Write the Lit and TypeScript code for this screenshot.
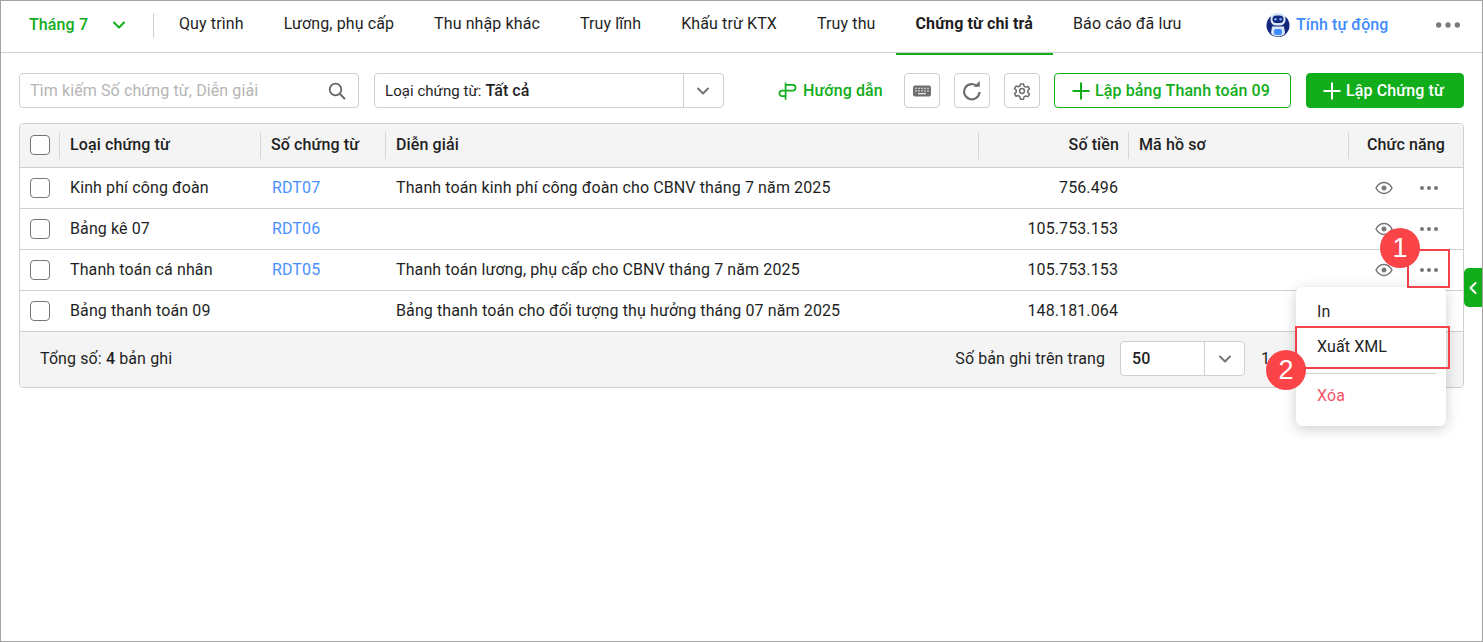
import { LitElement, html, css, svg } from "lit";
import { customElement } from "lit/decorators.js";

const chevron = (cls: string) => html`<svg class=${cls} width="16" height="16" viewBox="0 0 16 16" fill="none" stroke="currentColor" stroke-width="2" stroke-linecap="round" stroke-linejoin="round"><path d="M3 5.5 8 10.5 13 5.5"/></svg>`;
const dots = (cls: string) => html`<svg class=${cls} width="20" height="6" viewBox="0 0 20 6" fill="currentColor"><circle cx="3" cy="3" r="2"/><circle cx="10" cy="3" r="2"/><circle cx="17" cy="3" r="2"/></svg>`;
const eye = html`<svg class="eye" width="18" height="14" viewBox="0 0 18 14" fill="none" stroke="#757575" stroke-width="1.5"><path d="M1 7C3 3.4 5.8 1.6 9 1.6S15 3.4 17 7C15 10.6 12.2 12.4 9 12.4S3 10.6 1 7Z"/><circle cx="9" cy="7" r="2.1" fill="#757575" stroke-width="1"/></svg>`;
const plus = html`<svg width="18" height="18" viewBox="0 0 18 18" stroke="currentColor" stroke-width="2" stroke-linecap="square"><path d="M9 1.500V16.500M1.500 9H16.500"/></svg>`;

const rows = [
  ["Kinh phí công đoàn", "RDT07", "Thanh toán kinh phí công đoàn cho CBNV tháng 7 năm 2025", "756.496"],
  ["Bảng kê 07", "RDT06", "", "105.753.153"],
  ["Thanh toán cá nhân", "RDT05", "Thanh toán lương, phụ cấp cho CBNV tháng 7 năm 2025", "105.753.153"],
  ["Bảng thanh toán 09", "", "Bảng thanh toán cho đối tượng thụ hưởng tháng 07 năm 2025", "148.181.064"],
];
const tabs = ["Quy trình", "Lương, phụ cấp", "Thu nhập khác", "Truy lĩnh", "Khấu trừ KTX", "Truy thu", "Chứng từ chi trả", "Báo cáo đã lưu"];

@customElement("app-root")
export class AppRoot extends LitElement {
  static styles = css`
    :host { display: block; width: 1483px; height: 642px; box-sizing: border-box; border: 1px solid #a3a3a3; position: relative; overflow: hidden; background: #fff; font: 16px/20px Roboto, sans-serif; letter-spacing: 0.11px; color: #1f1f1f; }
    * { box-sizing: border-box; }
    .nav { height: 52px; border-bottom: 1px solid #cfcfcf; display: flex; align-items: flex-start; padding-left: 28px; }
    .month { width: 125px; height: 48px; display: flex; align-items: center; color: #11ad1b; font-weight: 500; flex: none; position: relative; }
    .month span { width: 82px; }
    .month::after { content: ""; position: absolute; right: 0; top: 12px; height: 25px; width: 1px; background: #cfcfcf; }
    .month svg { color: #11ad1b; }
    .tab { height: 54px; padding: 0 20px; line-height: 46px; flex: none; white-space: nowrap; }
    .tabs { display: flex; padding-left: 5px; flex: 1; }
    .tab.active { font-weight: 700; border-bottom: 2px solid #11ad1b; letter-spacing: 0.13px; }
    .auto { display: flex; align-items: center; height: 47px; color: #3f8cff; font-weight: 500; gap: 4px; position: absolute; left: 1263px; top: 0; letter-spacing: 0.06px; }
    .navdots { position: absolute; left: 1433px; top: 20px; width: 28px; height: 8px; color: #7b7b7b; }
    .toolbar { display: flex; align-items: center; height: 35px; margin: 20px 18px 0; }
    .search { width: 340px; height: 35px; border: 1px solid #cfcfcf; border-radius: 4px; display: flex; align-items: center; justify-content: space-between; padding: 0 12px 0 10px; color: #b5b5b5; }
    .select { width: 350px; height: 35px; margin-left: 15px; border: 1px solid #cfcfcf; border-radius: 4px; display: flex; align-items: center; padding-left: 10px; font-size: 15px; letter-spacing: 0.05px; }
    .select b { font-weight: 500; margin-left: 4px; flex: 1; font-size: 16px; }
    .select .arrow { width: 40px; height: 33px; border-left: 1px solid #cfcfcf; display: flex; align-items: center; justify-content: center; color: #757575; padding-right: 2px; }
    .guide { display: flex; align-items: center; gap: 6px; margin-left: 54px; width: 106px; color: #11ad1b; font-weight: 500; white-space: nowrap; }
    .ico { width: 36px; height: 35px; border: 1px solid #cfcfcf; border-radius: 4px; display: flex; align-items: center; justify-content: center; flex: none; }
    .guide + .ico { margin-left: 20px; }
    .ico + .ico { margin-left: 14px; }
    .btn { height: 35px; border-radius: 4px; display: flex; align-items: center; justify-content: center; gap: 5px; font-weight: 500; border: 1px solid #11ad1b; color: #11ad1b; flex: none; padding-right: 3px; }
    .btn.a { width: 237px; margin-left: 14px; }
    .btn.b { width: 158px; margin-left: 15px; background: #11ad1b; color: #fff; }
    .table { margin: 15px 18px 0; height: 265px; border: 1px solid #cfcfcf; border-radius: 4px; overflow: hidden; }
    .row { display: grid; grid-template-columns: 40px 201px 125px 593px 150px 220px 114px; height: 41px; border-bottom: 1px solid #cfcfcf; align-items: center; }
    .row.head { height: 44px; background: #f4f4f4; font-weight: 500; }
    .cell { padding: 0 10px; white-space: nowrap; height: 100%; display: flex; align-items: center; position: relative; }
    .head .cell { padding-bottom: 2px; }
    .head .cell + .cell::before { content: ""; position: absolute; left: -1px; top: 8px; bottom: 8px; width: 1px; background: #d6d6d6; }
    .num { justify-content: flex-end; }
    .row:not(.head) .num { padding-right: 11px; }
    .center { justify-content: center; padding: 0; }
    .box { width: 20px; height: 20px; border: 1px solid #757575; border-radius: 4px; background: #fff; }
    .link { color: #4a8fff; padding-left: 11px; }
    .acts { gap: 26px; justify-content: flex-end; padding-right: 24px; color: #757575; }
    .foot { height: 55px; background: #f4f4f4; display: flex; align-items: center; padding: 0 20px 2px; }
    .foot b { font-weight: 500; }
    .grow { flex: 1; }
    .pp { width: 125px; height: 35px; background: #fff; border: 1px solid #cfcfcf; border-radius: 4px; display: flex; align-items: center; margin: 0 16px 0 15px; padding-left: 11px; font-weight: 500; }
    .pp span { flex: 1; }
    .pp div { width: 40px; height: 33px; border-left: 1px solid #cfcfcf; display: flex; align-items: center; justify-content: center; color: #757575; }
    .pager { width: 182px; }
    .side { position: absolute; left: 1463px; top: 267px; width: 18px; height: 39px; background: #11ad1b; border-radius: 5px 0 0 5px; display: flex; align-items: center; justify-content: center; color: #fff; }
    .menu { position: absolute; left: 1295px; top: 286px; width: 150px; height: 139px; background: #fff; border-radius: 6px; box-shadow: 0 3px 14px rgba(0,0,0,.2); padding-top: 7px; }
    .item { height: 35px; padding-left: 21px; display: flex; align-items: center; }
    .item.del { color: #f2546a; height: 44px; }
    .sep { height: 1px; background: #cfcfcf; margin: 9px 10px 0; }
    .mark { position: absolute; border: 2px solid #f0434a; }
    .m1 { left: 1406px; top: 248px; width: 43px; height: 39px; }
    .m2 { left: 1294px; top: 325px; width: 155px; height: 43px; }
    .badge { position: absolute; width: 40px; height: 40px; border-radius: 50%; background: #fb4447; color: #fff; font: 27px/40px "Liberation Sans", sans-serif; text-align: center; }
    .b1 { left: 1379px; top: 227px; }
    .b2 { left: 1265px; top: 349px; }
  `;

  render() {
    return html`
      <div class="nav">
        <div class="month"><span>Tháng 7</span>${chevron("")}</div>
        <div class="tabs">${tabs.map((t) => html`<div class="tab ${t === "Chứng từ chi trả" ? "active" : ""}">${t}</div>`)}</div>
        <div class="auto">
          <svg width="28" height="26" viewBox="0 0 28 26">
            <circle cx="14" cy="13.500" r="11.500" fill="#12267e"/>
            <rect x="6.500" y="1" width="15" height="12.500" rx="5.500" fill="#dbe6f5"/>
            <rect x="8.500" y="3.500" width="11" height="7.500" rx="3.700" fill="#12267e"/>
            <circle cx="11.500" cy="7.200" r="1.200" fill="#7fb2ff"/><circle cx="16.500" cy="7.200" r="1.200" fill="#7fb2ff"/>
            <path d="M8 14.500H20L21 21C19.500 25.500 8.500 25.500 7 21Z" fill="#dbe6f5"/>
            <rect x="10" y="17" width="8" height="6" rx="2" fill="#3f8cff"/>
          </svg>
          <span>Tính tự động</span>
        </div>
        ${dots("navdots")}
      </div>
      <div class="toolbar">
        <div class="search"><span>Tìm kiếm Số chứng từ, Diễn giải</span>
          <svg width="18" height="18" viewBox="0 0 18 18" fill="none" stroke="#666" stroke-width="1.8" stroke-linecap="round"><circle cx="7.5" cy="7.5" r="5.8"/><path d="M12 12 16.5 16.5"/></svg>
        </div>
        <div class="select"><span>Loại chứng từ:</span><b>Tất cả</b><div class="arrow">${chevron("")}</div></div>
        <div class="guide">
          <svg width="19" height="20" viewBox="0 0 20 20" fill="none" stroke="currentColor" stroke-width="1.8" stroke-linecap="round" stroke-linejoin="round"><path d="M8 18.500V2M8 3.500H15.500A3 3 0 0 1 15.500 9.500H4.500A3 3 0 0 0 4.500 15.500H8"/></svg>
          Hướng dẫn
        </div>
        <div class="ico"><svg width="18" height="12" viewBox="0 0 18 12"><rect width="18" height="11" y=".5" rx="2" fill="#6e6e6e"/>${[3,6,9,12,15].flatMap((x)=>[3.4,6].map((y)=>svg`<rect x=${x-.7} y=${y-.7} width="1.4" height="1.4" fill="#e8e8e8"/>`))}<rect x="5" y="8" width="8" height="1.300" fill="#e8e8e8"/></svg></div>
        <div class="ico"><svg width="20" height="20" viewBox="0 0 20 20"><path d="M15.300 5.300A7.700 7.700 0 1 0 17.500 11" fill="none" stroke="#6e6e6e" stroke-width="2.200"/><path d="M11.500 5.800H17.800V0Z" fill="#6e6e6e"/></svg></div>
        <div class="ico"><svg width="18" height="18" viewBox="0 0 24 24" fill="none" stroke="#6e6e6e" stroke-width="2" stroke-linejoin="round"><circle cx="12" cy="12" r="3.200"/><path d="M10 2.500h4l.7 3 2.300 1.300 3-.9 2 3.400-2.300 2.100v2.600l2.300 2.100-2 3.400-3-.9-2.300 1.300-.7 3h-4l-.7-3L7 18.100l-3 .9-2-3.400 2.300-2.100v-2.600L2 8.800l2-3.400 3 .9 2.300-1.300z"/></svg></div>
        <div class="btn a">${plus}Lập bảng Thanh toán 09</div>
        <div class="btn b">${plus}Lập Chứng từ</div>
      </div>
      <div class="table">
        <div class="row head">
          <div class="cell center"><div class="box"></div></div>
          <div class="cell">Loại chứng từ</div><div class="cell">Số chứng từ</div><div class="cell">Diễn giải</div>
          <div class="cell num">Số tiền</div><div class="cell">Mã hồ sơ</div><div class="cell center">Chức năng</div>
        </div>
        ${rows.map((r) => html`<div class="row">
          <div class="cell center"><div class="box"></div></div>
          <div class="cell">${r[0]}</div><div class="cell link">${r[1]}</div><div class="cell">${r[2]}</div>
          <div class="cell num">${r[3]}</div><div class="cell"></div>
          <div class="cell acts">${eye}${dots("")}</div>
        </div>`)}
        <div class="foot">
          <span>Tổng số: <b>4</b> bản ghi</span><div class="grow"></div>
          <span>Số bản ghi trên trang</span>
          <div class="pp"><span>50</span><div>${chevron("")}</div></div>
          <div class="pager">1</div>
        </div>
      </div>
      <div class="side"><svg width="10" height="14" viewBox="0 0 10 14" fill="none" stroke="currentColor" stroke-width="2" stroke-linecap="round" stroke-linejoin="round"><path d="M7.500 2 2.500 7 7.500 12"/></svg></div>
      <div class="menu">
        <div class="item">In</div><div class="item">Xuất XML</div>
        <div class="sep"></div><div class="item del">Xóa</div>
      </div>
      <div class="mark m1"></div><div class="mark m2"></div>
      <div class="badge b1">1</div><div class="badge b2">2</div>
    `;
  }
}
